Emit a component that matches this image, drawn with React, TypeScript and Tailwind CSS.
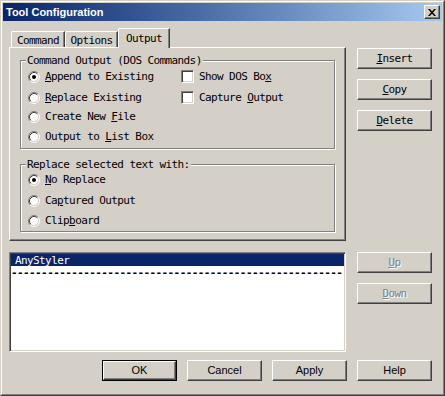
import React from "react";

const mono =
  "font-['DejaVu_Sans_Mono','Liberation_Mono',monospace] text-[11px] tracking-[-0.6px] leading-[13px]";
const sans = "font-['Liberation_Sans',Arial,sans-serif] text-[11px]";

const raised =
  "border border-t-white border-l-white border-r-[#404040] border-b-[#404040] shadow-[inset_-1px_-1px_0_#808080]";

function Radio({ checked }: { checked?: boolean }) {
  return (
    <svg width="12" height="12" viewBox="0 0 12 12" className="shrink-0">
      <circle cx="6" cy="6" r="4.5" fill="#fff" />
      <path d="M2.11 9.89A5.5 5.5 0 0 1 9.89 2.11" stroke="#808080" fill="none" />
      <path d="M9.89 2.11A5.5 5.5 0 0 1 2.11 9.89" stroke="#fff" fill="none" />
      <path d="M2.82 9.18A4.5 4.5 0 0 1 9.18 2.82" stroke="#404040" fill="none" />
      <path d="M9.18 2.82A4.5 4.5 0 0 1 2.82 9.18" stroke="#d4d0c8" fill="none" />
      {checked && <circle cx="6" cy="6" r="2" fill="#000" />}
    </svg>
  );
}

function Check() {
  return (
    <span className="w-[13px] h-[13px] shrink-0 bg-white border border-t-[#808080] border-l-[#808080] border-r-white border-b-white shadow-[inset_1px_1px_0_#404040,inset_-1px_-1px_0_#d4d0c8]" />
  );
}

function Option({
  children,
  className = "",
  box,
  checked,
}: {
  children: React.ReactNode;
  className?: string;
  box?: boolean;
  checked?: boolean;
}) {
  return (
    <div className={`flex items-center gap-[5px] h-[13px] ${className}`}>
      {box ? <Check /> : <Radio checked={checked} />}
      <span className={`${mono} whitespace-nowrap`}>{children}</span>
    </div>
  );
}

function Button({
  children,
  className = "",
  disabled,
  font = mono,
}: {
  children: React.ReactNode;
  className?: string;
  disabled?: boolean;
  font?: string;
}) {
  return (
    <div
      className={`w-[75px] h-[21px] bg-[#d4d0c8] flex items-center justify-center ${raised} ${font} ${
        disabled ? "text-[#808080] [text-shadow:1px_1px_0_#fff]" : "text-black"
      } ${className}`}
    >
      {children}
    </div>
  );
}

function Group({
  title,
  className = "",
  children,
}: {
  title: string;
  className?: string;
  children: React.ReactNode;
}) {
  return (
    <fieldset
      className={`w-[315px] border border-[#808080] shadow-[inset_1px_1px_0_#fff,1px_1px_0_#fff] ${className}`}
    >
      <legend className={`${mono} ml-[5px] px-[1px] bg-[#d4d0c8] h-[13px]`}>{title}</legend>
      {children}
    </fieldset>
  );
}

const tab =
  "w-[54px] h-[16px] flex items-center justify-center pt-[1px] rounded-tl-[2px] border-l border-t border-r border-l-white border-t-white border-r-[#404040] shadow-[inset_-1px_0_0_#808080]";

export default function App() {
  return (
    <div className="w-[445px] h-[396px] text-black bg-[#d4d0c8] border border-t-[#d4d0c8] border-l-[#d4d0c8] border-r-[#404040] border-b-[#404040]">
      <div className="h-full flex flex-col p-[1px] border border-t-white border-l-white border-r-[#808080] border-b-[#808080]">
        {/* title bar */}
        <div className="h-[18px] shrink-0 flex items-center justify-between pl-[3px] pr-[2px] bg-gradient-to-r from-[#0a246a] to-[#a6caf0]">
          <span className="font-['Liberation_Sans',Arial,sans-serif] text-[11px] font-bold text-white">
            Tool Configuration
          </span>
          <div className={`w-[16px] h-[14px] bg-[#d4d0c8] flex items-center justify-center ${raised}`}>
            <svg width="8" height="7" viewBox="0 0 8 7">
              <path d="M0 0h2l2 2.4 2-2.4h2l-3 3.5 3 3.5h-2l-2-2.4-2 2.4h-2l3-3.5z" fill="#000" />
            </svg>
          </div>
        </div>

        {/* body */}
        <div className="flex-1 flex flex-col pt-[7px] pl-[6px] pr-[10px]">
          <div className="flex">
            {/* left column */}
            <div className="w-[337px] flex flex-col">
              <div className="h-[19px] flex items-end pl-[2px]">
                <div className={`${mono} ${tab}`}>Command</div>
                <div className={`${mono} ${tab} !w-[53px]`}>Options</div>
                <div
                  className={`${mono} relative z-10 -mb-[1px] w-[52px] h-[20px] flex items-start justify-center pt-[3px] bg-[#d4d0c8] rounded-tl-[2px] border-l border-t border-r border-l-white border-t-white border-r-[#404040] shadow-[inset_-1px_0_0_#808080]`}
                >
                  Output
                </div>
              </div>

              {/* tab panel */}
              <div className="h-[194px] pl-[10px] border border-t-white border-l-white border-r-[#404040] border-b-[#404040] shadow-[inset_-1px_-1px_0_#808080]">
                <Group title="Command Output (DOS Commands)" className="mt-[6px] h-[95px]">
                  <div className="flex pl-[7px]">
                    <div className="w-[153px] flex flex-col">
                      <Option checked className="mt-[3px]">
                        <u>A</u>ppend to Existing
                      </Option>
                      <Option className="mt-[8px]">
                        <u>R</u>eplace Existing
                      </Option>
                      <Option className="mt-[6px]">
                        Create New <u>F</u>ile
                      </Option>
                      <Option className="mt-[7px]">
                        Output to <u>L</u>ist Box
                      </Option>
                    </div>
                    <div className="flex flex-col">
                      <Option box className="mt-[3px]">
                        Show DOS Bo<u>x</u>
                      </Option>
                      <Option box className="mt-[8px]">
                        Capture <u>O</u>utput
                      </Option>
                    </div>
                  </div>
                </Group>
                <Group title="Replace selected text with:" className="mt-[9px] h-[74px]">
                  <div className="flex flex-col pl-[7px]">
                    <Option checked className="mt-[2px]">
                      <u>N</u>o Replace
                    </Option>
                    <Option className="mt-[8px]">
                      Ca<u>p</u>tured Output
                    </Option>
                    <Option className="mt-[7px]">
                      Clip<u>b</u>oard
                    </Option>
                  </div>
                </Group>
              </div>

              {/* list box */}
              <div className="mt-[11px] h-[100px] bg-white overflow-hidden border border-t-[#808080] border-l-[#808080] border-r-white border-b-white shadow-[inset_1px_1px_0_#404040,inset_-1px_-1px_0_#d4d0c8] p-[1px]">
                <div className={`${mono} h-[12px] leading-[12px] bg-[#0a246a] text-white pl-[4px]`}>AnyStyler</div>
                <div className={`${mono} h-[12px] leading-[10px] whitespace-nowrap font-bold`}>
                  {"-".repeat(55)}
                </div>
              </div>
            </div>

            {/* right column */}
            <div className="ml-[11px] flex flex-col pt-[20px]">
              <Button>
                <u>I</u>nsert
              </Button>
              <Button className="mt-[10px]">
                <u>C</u>opy
              </Button>
              <Button className="mt-[10px]">
                <u>D</u>elete
              </Button>
              <Button disabled className="mt-[121px]">
                <u>U</u>p
              </Button>
              <Button disabled className="mt-[10px]">
                <u>D</u>own
              </Button>
            </div>
          </div>

          {/* bottom buttons */}
          <div className="mt-[8px] flex justify-end gap-[10px]">
            <div className="w-[75px] h-[21px] border border-black">
              <Button font={sans} className="w-full h-full">
                OK
              </Button>
            </div>
            <Button font={sans}>Cancel</Button>
            <Button font={sans}>Apply</Button>
            <Button font={sans}>Help</Button>
          </div>
        </div>
      </div>
    </div>
  );
}
